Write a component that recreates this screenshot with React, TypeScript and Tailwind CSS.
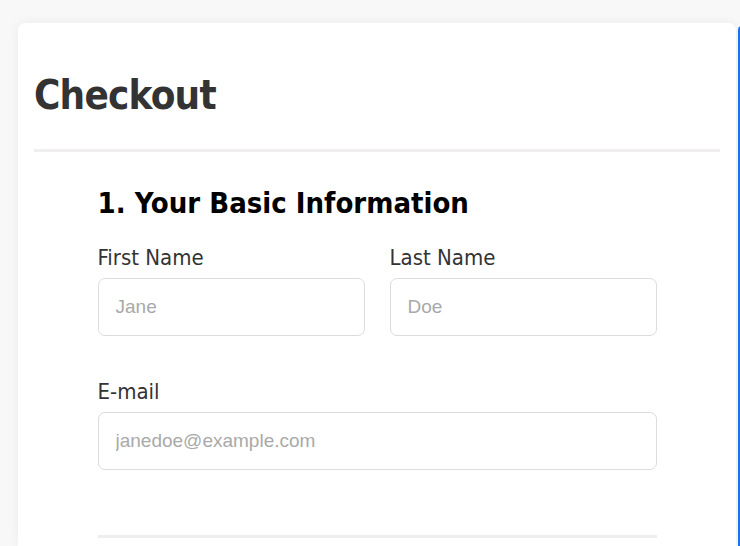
const sans = "font-['DejaVu_Sans_Condensed','DejaVu_Sans',sans-serif]";

function Field({ label, placeholder }: { label: string; placeholder: string }) {
  return (
    <label className="flex flex-col">
      <span className={`${sans} text-[22px] leading-[28px] text-[#333]`}>{label}</span>
      <input
        placeholder={placeholder}
        className="mt-[6px] h-[58px] rounded-[7px] border border-[#dcdcdc] px-[17px] font-['Liberation_Sans',Arial,sans-serif] text-[19px] text-[#333] outline-none placeholder:text-[#a9a9a9]"
      />
    </label>
  );
}

export default function App() {
  return (
    <div className="flex h-[546px] overflow-hidden bg-[#f8f8f8] pt-[23px] pl-[18px]">
      <div className="w-[718px] shrink-0 rounded-t-[7px] bg-white px-4 pt-[48px] shadow-[0_0_12px_rgba(0,0,0,0.06)]">
        <h1 className={`${sans} text-[40px] font-bold leading-[48px] tracking-[-0.8px] text-[#333]`}>
          Checkout
        </h1>
        <div className="mt-[30px] h-[3px] bg-[#efeded]" />

        <div className="mx-auto mt-[34px] w-[559px]">
          <h2 className={`${sans} text-[29px] font-bold leading-[34px] text-black`}>
            1. Your Basic Information
          </h2>

          <div className="mt-[24px] grid grid-cols-2 gap-x-[25px]">
            <Field label="First Name" placeholder="Jane" />
            <Field label="Last Name" placeholder="Doe" />
          </div>

          <div className="mt-[42px]">
            <Field label="E-mail" placeholder="janedoe@example.com" />
          </div>

          <div className="mt-[65px] h-[3px] bg-[#efeded]" />
        </div>
      </div>

      <div className="ml-[2px] mt-[3px] w-[10px] shrink-0 rounded-tl-[4px] border-l-[2px] border-[#1a73e8] bg-white" />
    </div>
  );
}
